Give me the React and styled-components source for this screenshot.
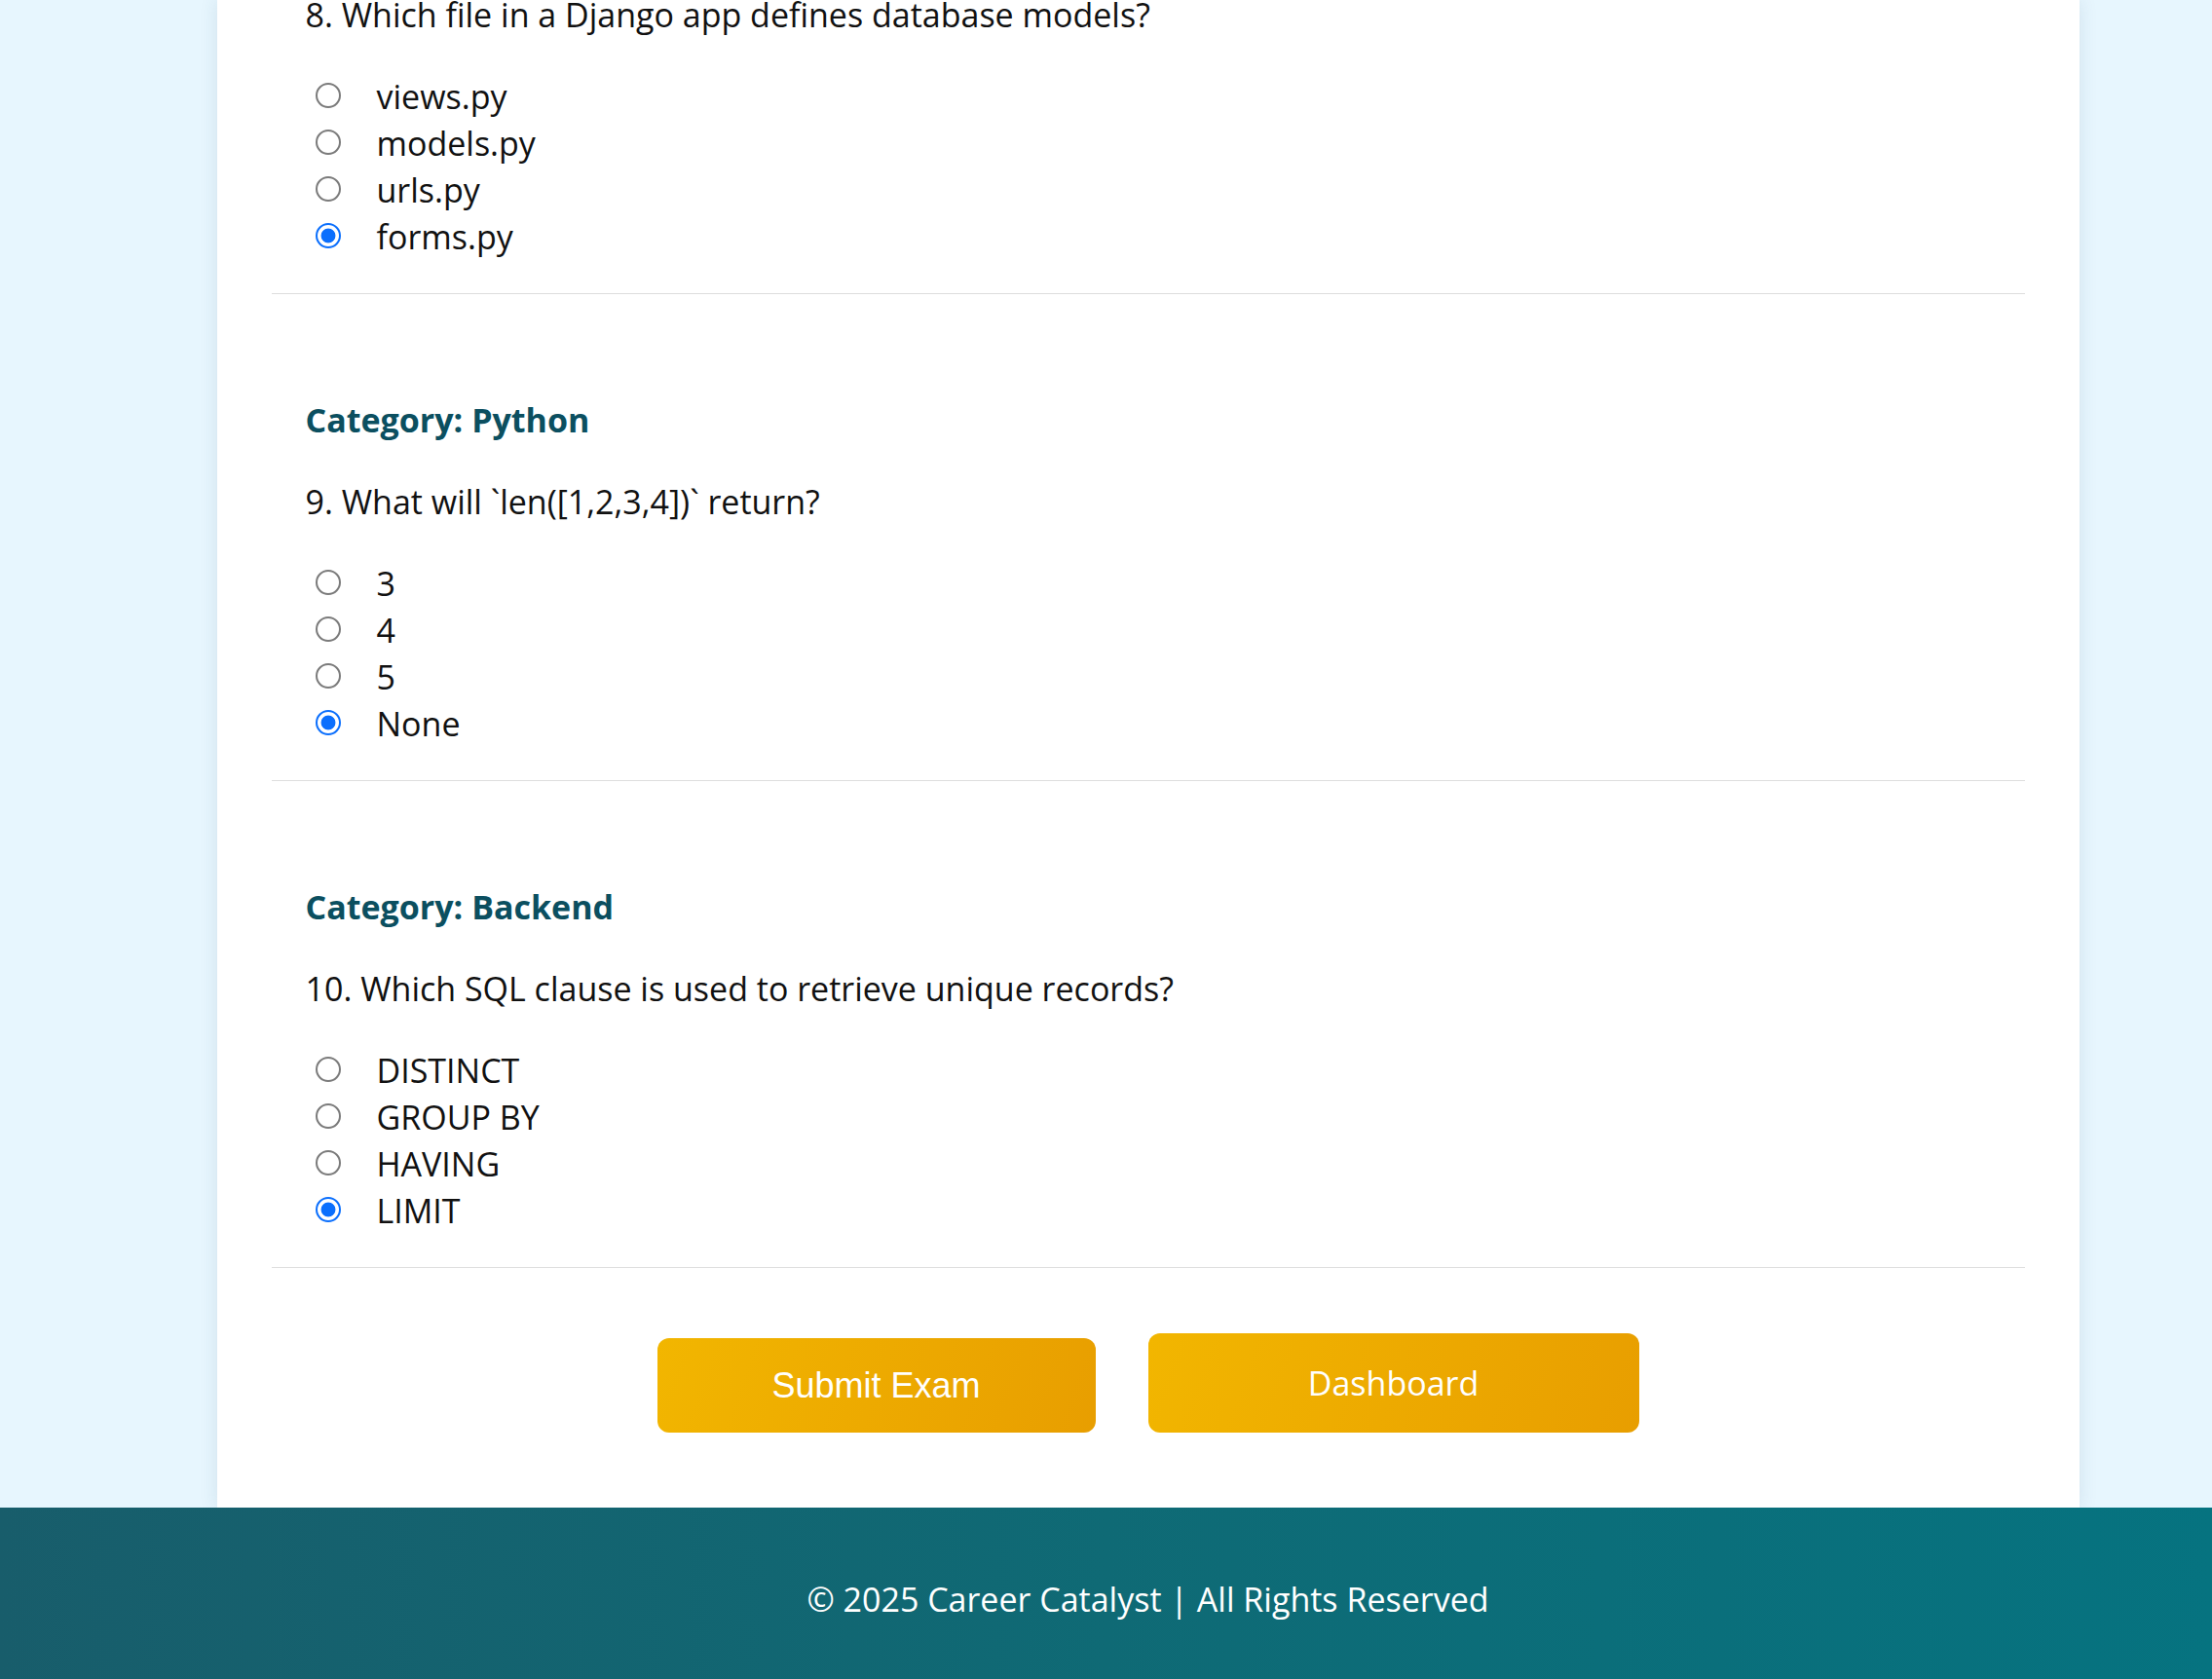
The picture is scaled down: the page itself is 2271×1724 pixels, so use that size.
import React from "react";
import styled, { createGlobalStyle } from "styled-components";

const GlobalStyle = createGlobalStyle`
  html, body {
    margin: 0;
    padding: 0;
  }
  body {
    background: #e7f6fe;
    font-family: "Open Sans", "Noto Sans", sans-serif;
    color: #111;
  }
`;

const Page = styled.div`
  display: flex;
  flex-direction: column;
  min-height: 100vh;
  overflow: hidden;
`;

const Main = styled.main`
  display: flex;
  justify-content: center;
  padding-left: 86px;
`;

const Card = styled.div`
  width: 1912px;
  box-sizing: border-box;
  background: #ffffff;
  padding: 0 56px 77px;
  box-shadow: 0 0 18px rgba(40, 80, 110, 0.12);
`;

const Section = styled.section`
  border-bottom: 1px solid #dedede;
  padding: ${(p) => (p.$cut ? "0" : "105px")} 35px 34px;
  margin-top: ${(p) => (p.$cut ? "-9px" : "0")};
`;

const Category = styled.h3`
  margin: 0 0 36px;
  font-size: 34px;
  line-height: 48px;
  font-weight: 700;
  color: #0b4f60;
`;

const Question = styled.p`
  margin: 0 0 36px;
  font-size: 34px;
  line-height: 48px;
  color: #111;
`;

const Options = styled.div`
  display: flex;
  flex-direction: column;
`;

const Option = styled.label`
  display: flex;
  align-items: center;
  gap: 37px;
  height: 48px;
  padding-left: 10px;
  font-size: 34px;
  line-height: 48px;
  color: #111;
`;

const Radio = styled.input`
  appearance: none;
  -webkit-appearance: none;
  box-sizing: border-box;
  width: 26px;
  height: 26px;
  margin: -3px 0 0;
  flex: none;
  border: 2px solid #7b7b7b;
  border-radius: 50%;
  background: #fff;

  &:checked {
    border-color: #0b6ffd;
    background: radial-gradient(circle, #0b6ffd 0 7px, #fff 7.8px);
  }
`;

const ButtonRow = styled.div`
  display: flex;
  justify-content: center;
  align-items: flex-end;
  gap: 54px;
  margin-top: 67px;
`;

const gold = `linear-gradient(110deg, #f2b600 0%, #e89e00 100%)`;

const SubmitButton = styled.button`
  width: 450px;
  height: 97px;
  border: none;
  border-radius: 12px;
  background: ${gold};
  color: #fff;
  font-family: "Liberation Sans", Arial, sans-serif;
  font-size: 36px;
  cursor: pointer;
`;

const DashLink = styled.a`
  display: flex;
  align-items: center;
  justify-content: center;
  width: 504px;
  height: 102px;
  border-radius: 12px;
  background: ${gold};
  color: #fff;
  font-size: 34px;
  text-decoration: none;
`;

const Footer = styled.footer`
  flex: 1;
  background: linear-gradient(90deg, #185d6b 0%, #0f6a75 50%, #067380 100%);
  color: #fff;
  text-align: center;
  padding: 70px 0 56px 86px;
  font-size: 34px;
  line-height: 48px;
`;

const questions = [
  {
    n: 8,
    cut: true,
    text: "Which file in a Django app defines database models?",
    options: ["views.py", "models.py", "urls.py", "forms.py"],
  },
  {
    n: 9,
    category: "Python",
    text: "What will `len([1,2,3,4])` return?",
    options: ["3", "4", "5", "None"],
  },
  {
    n: 10,
    category: "Backend",
    text: "Which SQL clause is used to retrieve unique records?",
    options: ["DISTINCT", "GROUP BY", "HAVING", "LIMIT"],
  },
];

export default function App() {
  return (
    <Page>
      <GlobalStyle />
      <Main>
        <Card>
          {questions.map((q) => (
            <Section key={q.n} $cut={q.cut}>
              {q.category && <Category>Category: {q.category}</Category>}
              <Question>
                {q.n}. {q.text}
              </Question>
              <Options>
                {q.options.map((o, i) => (
                  <Option key={o}>
                    <Radio
                      type="radio"
                      name={`q${q.n}`}
                      defaultChecked={i === q.options.length - 1}
                    />
                    {o}
                  </Option>
                ))}
              </Options>
            </Section>
          ))}
          <ButtonRow>
            <SubmitButton type="button">Submit Exam</SubmitButton>
            <DashLink href="#">Dashboard</DashLink>
          </ButtonRow>
        </Card>
      </Main>
      <Footer>© 2025 Career Catalyst | All Rights Reserved</Footer>
    </Page>
  );
}
